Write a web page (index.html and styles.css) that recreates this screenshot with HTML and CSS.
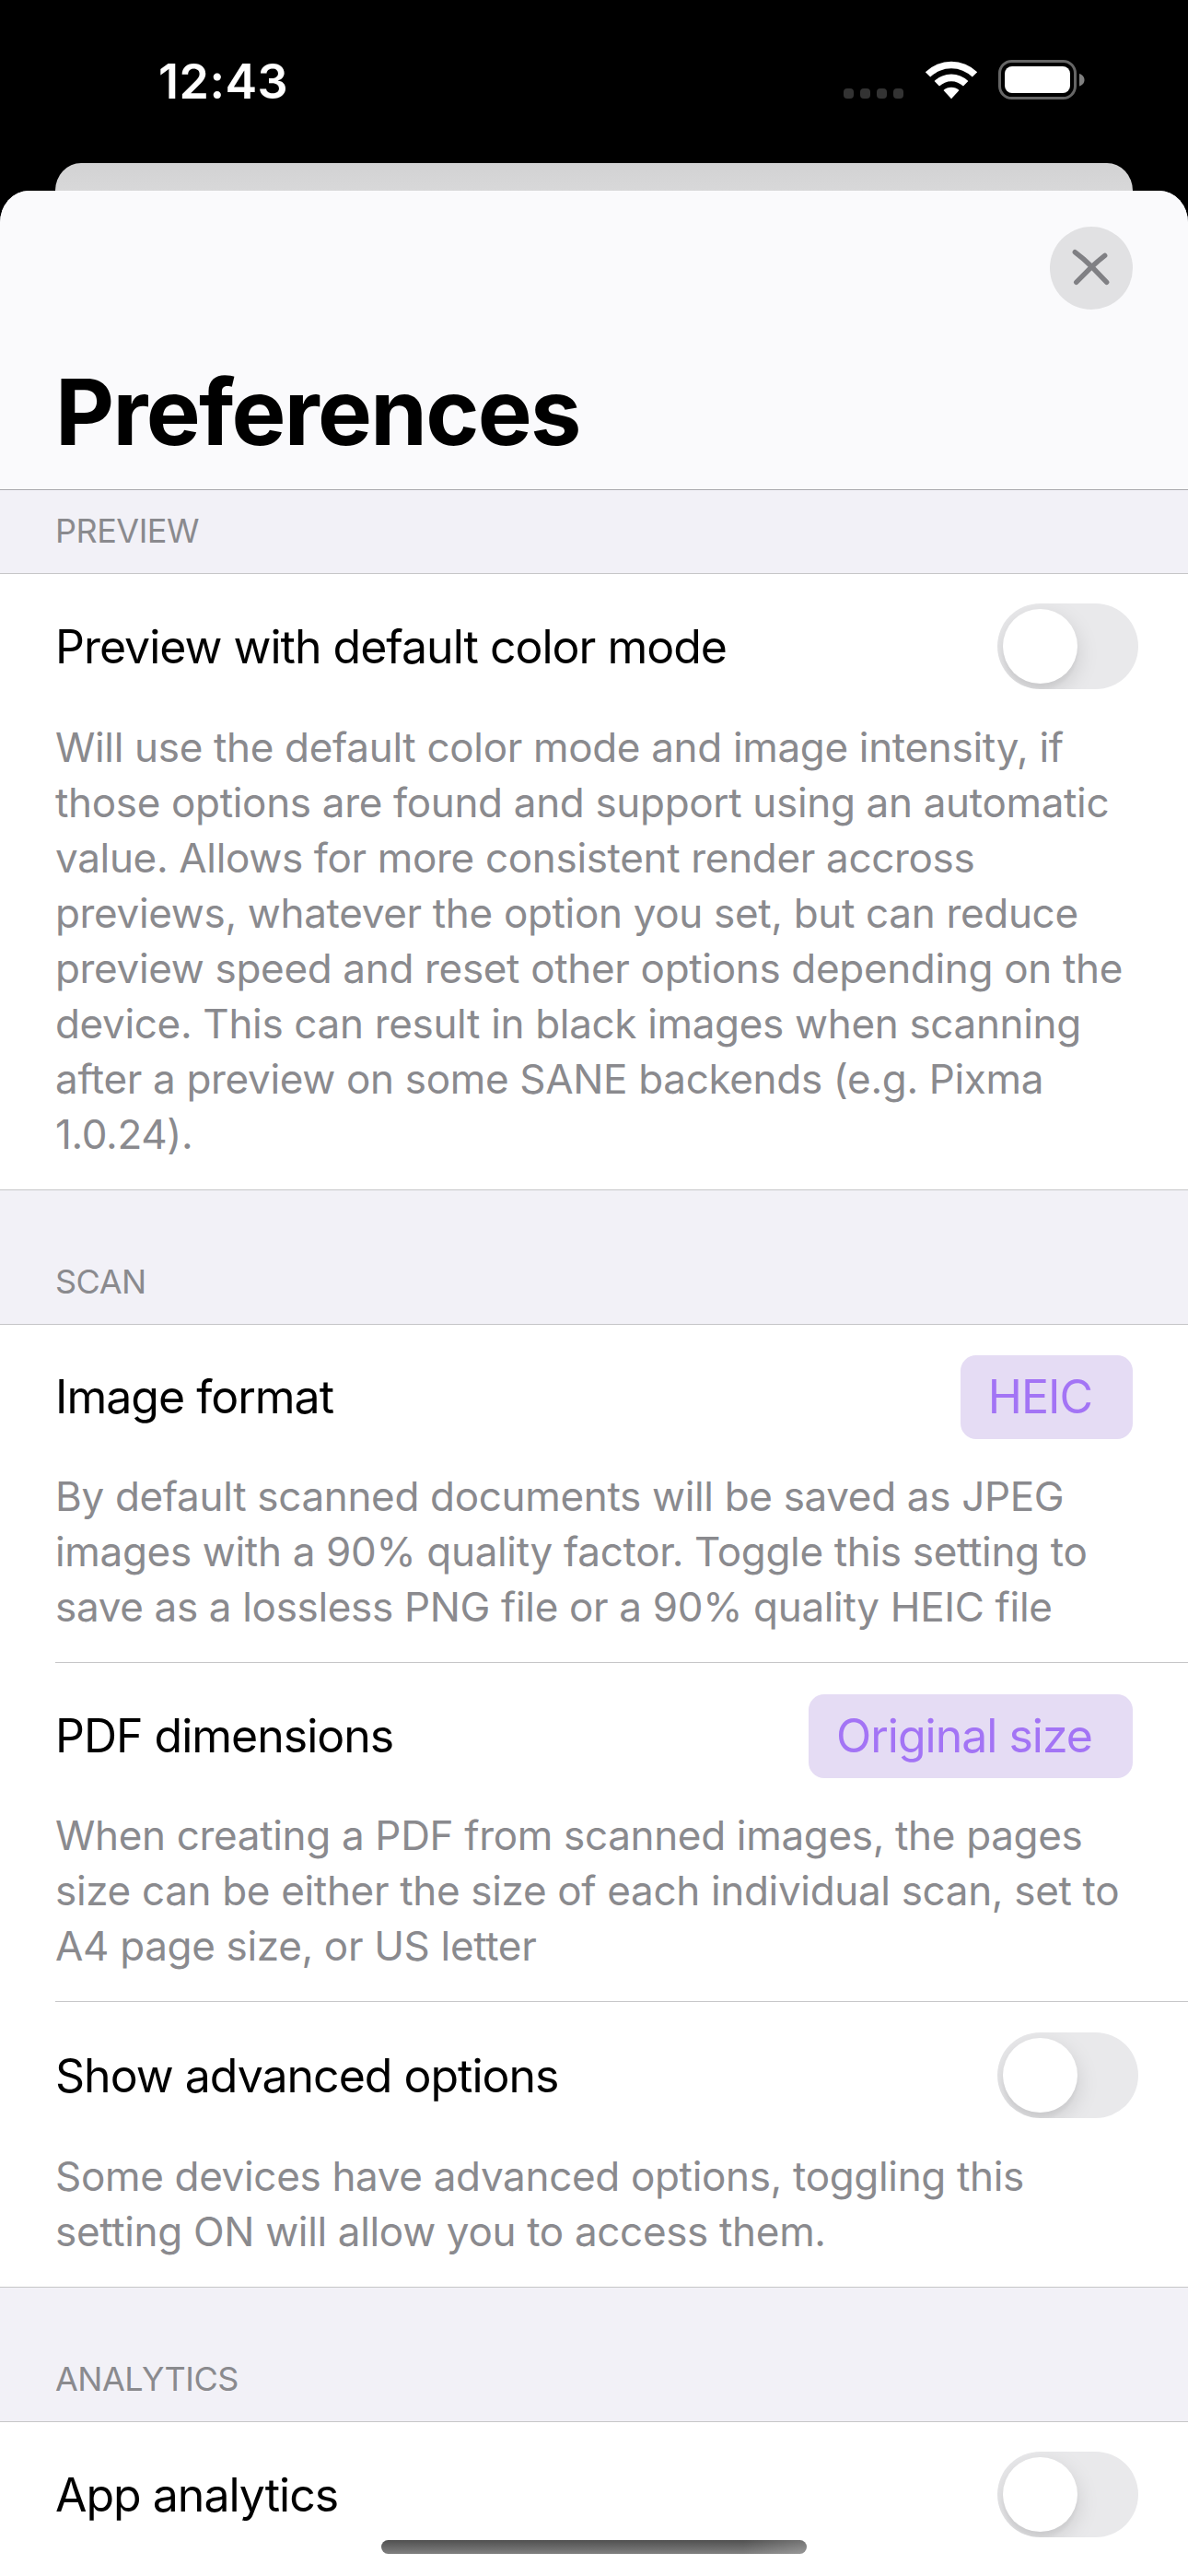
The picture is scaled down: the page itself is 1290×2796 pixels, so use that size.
FILE: index.html
```html
<!DOCTYPE html>
<html lang="en">
<head>
<meta charset="utf-8">
<title>Preferences</title>
<link rel="stylesheet" href="styles.css">
</head>
<body>
<div class="screen">
  <header class="status">
    <span class="time">12:43</span>
    <div class="indicators">
      <div class="cellular"><i></i><i></i><i></i><i></i></div>
      <svg class="wifi" width="58" height="43" viewBox="0 0 58 43">
        <path d="M.8 13.2A40.2 40.2 0 0 1 57.2 13.2L51.8 18.6A32.4 32.4 0 0 0 6.2 18.6Z"/>
        <path d="M10.6 23A26.4 26.4 0 0 1 47.4 23L42 28.6A18.7 18.7 0 0 0 16 28.6Z"/>
        <path d="M20.5 33A12.6 12.6 0 0 1 37.5 33L29 42.2Z"/>
      </svg>
      <svg class="battery" width="94" height="43" viewBox="0 0 94 43">
        <rect x="1.5" y="1.5" width="82" height="40" rx="13" fill="none" stroke="#666" stroke-width="3"/>
        <rect x="7" y="7" width="71" height="29" rx="8" fill="#fff"/>
        <path d="M88 15V28.500C92 27 93.500 24.500 93.500 21.700C93.500 19 92 16.500 88 15Z" fill="#808080"/>
      </svg>
    </div>
  </header>
  <div class="back-sheet"></div>
  <main class="sheet">
    <div class="navbar">
      <button class="close" aria-label="Close">
        <svg width="90" height="90" viewBox="0 0 90 90"><path d="M27.300 27.700Q36 34 45.500 43.500L61.700 60.300M59.700 31.300Q53 36.500 45.500 43.500L28.700 60.300" fill="none" stroke="#808084" stroke-width="5.400" stroke-linecap="round"/></svg>
      </button>
      <h1>Preferences</h1>
    </div>
    <h2 class="label first">PREVIEW</h2>
    <section class="group">
      <div class="cell switch">
        <div class="row"><span class="name">Preview with default color mode</span><span class="toggle"></span></div>
        <p>Will use the default color mode and image intensity, if<br>those options are found and support using an automatic<br>value. Allows for more consistent render accross<br>previews, whatever the option you set, but can reduce<br>preview speed and reset other options depending on the<br>device. This can result in black images when scanning<br>after a preview on some SANE backends (e.g. Pixma<br>1.0.24).</p>
      </div>
    </section>
    <h2 class="label">SCAN</h2>
    <section class="group">
      <div class="cell">
        <div class="row"><span class="name">Image format</span><span class="pill">HEIC</span></div>
        <p>By default scanned documents will be saved as JPEG<br>images with a 90% quality factor. Toggle this setting to<br>save as a lossless PNG file or a 90% quality HEIC file</p>
      </div>
      <div class="cell">
        <div class="row"><span class="name">PDF dimensions</span><span class="pill">Original size</span></div>
        <p>When creating a PDF from scanned images, the pages<br>size can be either the size of each individual scan, set to<br>A4 page size, or US letter</p>
      </div>
      <div class="cell switch">
        <div class="row"><span class="name">Show advanced options</span><span class="toggle"></span></div>
        <p>Some devices have advanced options, toggling this<br>setting ON will allow you to access them.</p>
      </div>
    </section>
    <h2 class="label">ANALYTICS</h2>
    <section class="group last">
      <div class="cell switch">
        <div class="row"><span class="name">App analytics</span><span class="toggle"></span></div>
      </div>
    </section>
  </main>
  <div class="home"></div>
</div>
</body>
</html>
```
FILE: styles.css
```css
* { box-sizing: border-box; }
body { margin: 0; background: #000; font-family: Inter, "Liberation Sans", sans-serif; }
.screen { position: relative; width: 1290px; height: 2796px; overflow: hidden; background: #000; display: flex; flex-direction: column; }
.status { height: 177px; flex: none; display: flex; justify-content: space-between; padding: 0 112px 0 172px; color: #fff; }
.time { font-size: 52px; font-weight: 600; line-height: 64px; margin-top: 57px; letter-spacing: 0.5px; }
.indicators { display: flex; align-items: flex-start; padding-top: 65px; }
.cellular { display: flex; gap: 7px; margin: 31px 23px 0 0; }
.cellular i { width: 11px; height: 11px; border-radius: 4px; background: #333; }
.wifi { fill: #fff; margin-right: 22px; }
.back-sheet { flex: none; height: 30px; margin: 0 60px; border-radius: 28px 28px 0 0 / 30px 30px 0 0; background: linear-gradient(#d2d2d3, #d8d8d9); }
.sheet { flex: 1; min-height: 0; overflow: hidden; display: flex; flex-direction: column; border-radius: 31px 31px 0 0 / 35px 35px 0 0; background: #f2f1f7; }
.navbar { flex: none; height: 325px; display: flex; flex-direction: column; padding: 39px 60px 0; background: #fafafc; border-bottom: 1px solid #a9a9ad; }
.close { align-self: flex-end; width: 90px; height: 90px; padding: 0; border: 0; border-radius: 50%; background: #e1e1e3; }
.close svg { display: block; }
h1 { margin: 51px 0 0; font-size: 99px; line-height: 120px; font-weight: 700; letter-spacing: -1.7px; color: #000; }
.label { flex: none; margin: 0; height: 145px; padding: 74px 60px 0; font-size: 36px; line-height: 50px; font-weight: 400; letter-spacing: -0.5px; color: #8a8a8e; }
.label.first { height: 90px; padding-top: 19px; }
.group { flex: none; background: #fff; border-top: 1px solid #c6c6c8; border-bottom: 1px solid #c6c6c8; }
.group.last { flex: 1; border-bottom: 0; }
.cell { padding: 32px 0 30px; margin-left: 60px; }
.cell + .cell { padding-top: 33px; border-top: 1px solid #c6c6c8; }
.row { display: flex; align-items: center; justify-content: space-between; height: 92px; padding-right: 60px; }
.name { font-size: 50px; line-height: 60px; color: #000; letter-spacing: -1px; }
.switch .name { padding-top: 2px; }
.toggle { width: 153px; height: 93px; margin-right: -6px; padding: 6px; border-radius: 47px; background: #e9e9eb; overflow: hidden; }
.toggle::before { content: ""; display: block; width: 81px; height: 81px; border-radius: 50%; background: #fff; box-shadow: 0 8px 24px rgba(0,0,0,.13), 0 6px 4px rgba(0,0,0,.04); }
.pill { height: 91px; padding: 0 44px 0 30px; border-radius: 17px; background: #e5dcf4; color: #a374f5; font-size: 50px; line-height: 90px; letter-spacing: -1px; }
p { margin: 32px 0 0; font-size: 44px; line-height: 60px; color: #8a8a8e; letter-spacing: -0.33px; white-space: nowrap; }
.switch p { margin-top: 34px; }
.home { position: absolute; left: 414px; top: 2757px; width: 462px; height: 15px; border-radius: 8px; background: linear-gradient(90deg, transparent 85%, rgba(255,255,255,.2)), linear-gradient(#505050, #808080); }
```
